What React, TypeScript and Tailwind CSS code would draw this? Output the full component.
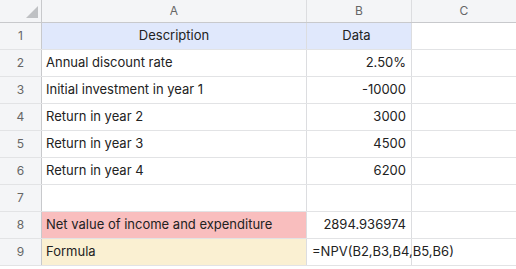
import React from "react";

const rows: { a: string; b: string; aBg?: string; bBg?: string; aAlign?: string; bAlign?: string }[] = [
  { a: "Description", b: "Data", aBg: "bg-[#e0e8fc]", bBg: "bg-[#e0e8fc]", aAlign: "justify-center", bAlign: "justify-center" },
  { a: "Annual discount rate", b: "2.50%" },
  { a: "Initial investment in year 1", b: "-10000" },
  { a: "Return in year 2", b: "3000" },
  { a: "Return in year 3", b: "4500" },
  { a: "Return in year 4", b: "6200" },
  { a: "", b: "" },
  { a: "Net value of income and expenditure", b: "2894.936974", aBg: "bg-[#f9bebe]" },
  { a: "Formula", b: "=NPV(B2,B3,B4,B5,B6)", aBg: "bg-[#faf0d2]", bAlign: "justify-start pl-[5px]" },
];

export default function App() {
  return (
    <div
      className="w-[516px] h-[269px] overflow-hidden bg-white text-[#222] text-[13px]"
      style={{ fontFamily: "Inter, 'Noto Sans', sans-serif" }}
    >
      <div className="flex h-[23px] bg-[#f4f5f7] border-b border-[#c8c9cc] text-[#666] text-[12px]">
        <div className="w-[42px] shrink-0 border-r border-[#c8c9cc] relative">
          <div
            className="absolute left-[26px] top-[6px] w-[12px] h-[12px] bg-[#bfc1c4]"
            style={{ clipPath: "polygon(100% 0, 100% 100%, 0 100%)" }}
          />
        </div>
        <div className="w-[265px] shrink-0 border-r border-[#dcdde0] flex items-center justify-center">A</div>
        <div className="w-[105px] shrink-0 border-r border-[#dcdde0] flex items-center justify-center">B</div>
        <div className="flex-1 flex items-center justify-center">C</div>
      </div>
      {rows.map((r, i) => (
        <div key={i} className="flex h-[27px] border-b border-[#e2e3e5]">
          <div className="w-[42px] shrink-0 bg-[#f4f5f7] border-r border-[#c8c9cc] flex items-center justify-center text-[#666] text-[12px]">
            {i + 1}
          </div>
          <div className={`w-[265px] shrink-0 border-r border-[#dcdde0] flex items-center px-[4px] whitespace-nowrap ${r.aBg ?? ""} ${r.aAlign ?? ""}`}>
            {r.a}
          </div>
          <div className={`w-[105px] shrink-0 border-r border-[#dcdde0] flex items-center pr-[5px] whitespace-nowrap ${r.bBg ?? ""} ${r.bAlign ?? "justify-end"}`}>
            {r.b}
          </div>
          <div className="flex-1" />
        </div>
      ))}
    </div>
  );
}
